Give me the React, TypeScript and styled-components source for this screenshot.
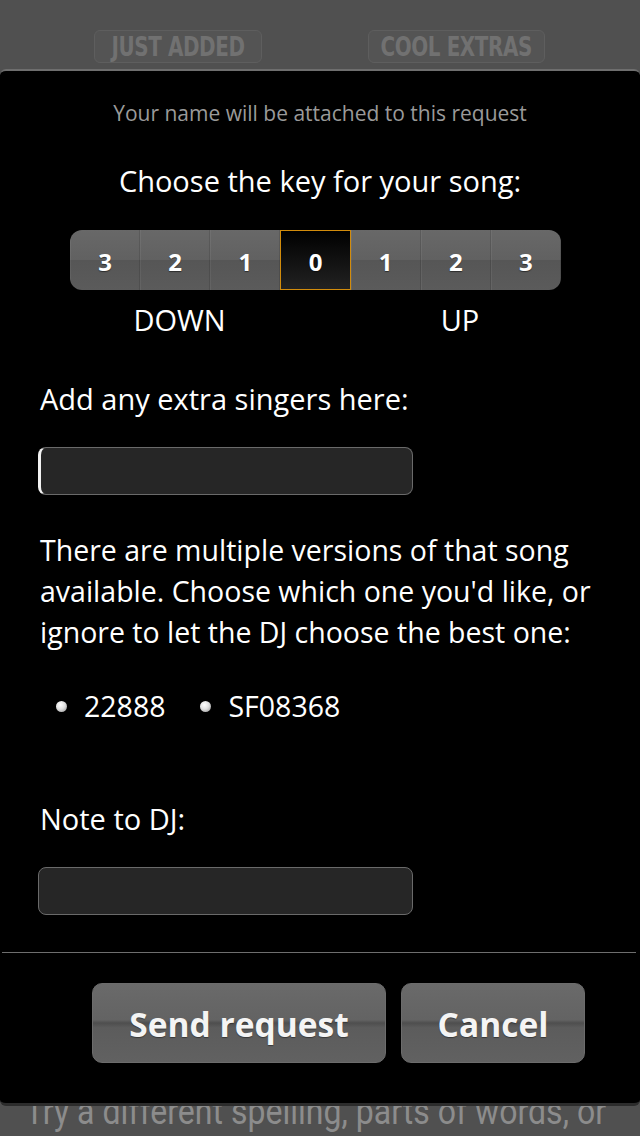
import styled, { createGlobalStyle } from "styled-components";

const GlobalStyle = createGlobalStyle`
  html, body {
    margin: 0;
    padding: 0;
    background: #505050;
  }
  * {
    box-sizing: border-box;
  }
`;

const keys = ["3", "2", "1", "0", "1", "2", "3"];

function App() {
  return (
    <Page>
      <GlobalStyle />
      <TabBar>
        <Tab $width={168}>
          <TabText>JUST ADDED</TabText>
        </Tab>
        <Tab $width={177}>
          <TabText>COOL EXTRAS</TabText>
        </Tab>
      </TabBar>
      <Hint>Try a different spelling, parts of words, or</Hint>

      <Dialog>
        <Subtitle>Your name will be attached to this request</Subtitle>
        <Title>Choose the key for your song:</Title>
        <KeyBar>
          {keys.map((k, i) => (
            <KeyButton key={i} $selected={i === 3}>
              {k}
            </KeyButton>
          ))}
        </KeyBar>
        <KeyLabels>
          <KeyLabel>DOWN</KeyLabel>
          <KeyLabel>UP</KeyLabel>
        </KeyLabels>

        <Label $top={43}>Add any extra singers here:</Label>
        <TextInput $focused />

        <Paragraph>
          There are multiple versions of that song
          <br />
          available. Choose which one you'd like, or
          <br />
          ignore to let the DJ choose the best one:
        </Paragraph>
        <Versions>
          <Version>
            <Dot />
            22888
          </Version>
          <Version>
            <Dot />
            SF08368
          </Version>
        </Versions>

        <Label $top={77}>Note to DJ:</Label>
        <TextInput />

        <Divider />
        <Actions>
          <ActionButton $width={294}>Send request</ActionButton>
          <ActionButton $width={184}>Cancel</ActionButton>
        </Actions>
      </Dialog>
    </Page>
  );
}

export default App;

const Page = styled.div`
  position: relative;
  width: 640px;
  height: 1136px;
  overflow: hidden;
  background: #505050;
  font-family: "Open Sans", "Noto Sans", sans-serif;
`;

const TabBar = styled.div`
  display: flex;
  column-gap: 106px;
  height: 70px;
  padding: 30px 0 0 94px;
`;

const Tab = styled.div<{ $width: number }>`
  width: ${(p) => p.$width}px;
  height: 33px;
  display: flex;
  align-items: center;
  justify-content: center;
  border: 1px solid #5e5e5e;
  border-radius: 6px;
  background: #545454;
  overflow: hidden;
`;

const TabText = styled.span`
  display: inline-block;
  color: #717171;
  font-family: "DejaVu Sans Condensed", "Open Sans", sans-serif;
  font-weight: 700;
  font-size: 27px;
  letter-spacing: -0.5px;
  white-space: nowrap;
  transform: scaleX(0.82);
`;

const Hint = styled.p`
  margin: 1020px 0 0 0;
  padding-left: 28px;
  color: #8c8c8c;
  font-family: Roboto, "Liberation Sans", sans-serif;
  font-size: 36px;
  line-height: 44px;
  white-space: nowrap;
  transform: scaleX(0.89);
  transform-origin: left center;
`;

const Dialog = styled.div`
  position: absolute;
  top: 69px;
  left: 0;
  right: 0;
  height: 1037px;
  background: #000;
  border-top: 2px solid #6e6e6e;
  border-bottom: 3px solid #2c2c2c;
  border-radius: 6px;
  padding: 27px 0 0 40px;
  color: #fff;
`;

const Subtitle = styled.div`
  margin-left: -40px;
  text-align: center;
  color: #9a9a9a;
  font-size: 21px;
  line-height: 30px;
`;

const Title = styled.div`
  margin: 35px 0 0 -40px;
  text-align: center;
  font-size: 29px;
  line-height: 36px;
`;

const KeyBar = styled.div`
  margin: 31px 0 0 30px;
  width: 491px;
  height: 60px;
  display: grid;
  grid-template-columns: repeat(7, 1fr);
  border-radius: 12px;
  overflow: hidden;
  background: linear-gradient(#686868 0%, #616161 50%, #565656 50%, #5b5b5b 100%);
`;

const KeyButton = styled.div<{ $selected?: boolean }>`
  display: flex;
  align-items: center;
  justify-content: center;
  padding-top: 2px;
  font-weight: 700;
  font-size: 24px;
  color: #fff;
  text-shadow: 0 1px 1px rgba(0, 0, 0, 0.5);
  border-left: 1px solid rgba(255, 255, 255, 0.06);
  border-right: 1px solid rgba(0, 0, 0, 0.12);
  ${(p) =>
    p.$selected &&
    `
    background: linear-gradient(#000 0%, #111 50%, #222 100%);
    border: 1px solid #d28c0c;
  `}
`;

const KeyLabels = styled.div`
  margin: 12px 0 0 34px;
  width: 491px;
  display: grid;
  grid-template-columns: 211px 70px 210px;
  & > :last-child {
    grid-column: 3;
  }
`;

const KeyLabel = styled.div`
  text-align: center;
  font-size: 29px;
  line-height: 36px;
`;

const Label = styled.div<{ $top: number }>`
  margin-top: ${(p) => p.$top}px;
  font-size: 29px;
  line-height: 36px;
`;

const TextInput = styled.div<{ $focused?: boolean }>`
  margin: 30px 0 0 -2px;
  width: 375px;
  height: 48px;
  background: #262626;
  border: 1px solid #6a6a6a;
  border-radius: 8px;
  ${(p) =>
    p.$focused &&
    `
    border-left: 3px solid #f2f2f2;
  `}
`;

const Paragraph = styled.p`
  margin: 35px 0 0 0;
  font-size: 28.5px;
  line-height: 41px;
  white-space: nowrap;
`;

const Versions = styled.div`
  margin-top: 35px;
  display: flex;
  column-gap: 35px;
  padding-left: 16px;
`;

const Version = styled.div`
  display: flex;
  align-items: center;
  column-gap: 17px;
  font-size: 28.5px;
  line-height: 36px;
`;

const Dot = styled.span`
  width: 11px;
  height: 11px;
  border-radius: 50%;
  background: radial-gradient(circle at 40% 35%, #ffffff 0%, #e0e0e0 45%, #8a8a8a 100%);
`;

const Divider = styled.div`
  margin: 37px 0 0 -38px;
  width: 634px;
  height: 1px;
  background: #6e6e6e;
`;

const Actions = styled.div`
  margin: 30px 0 0 52px;
  display: flex;
  column-gap: 15px;
`;

const ActionButton = styled.button<{ $width: number }>`
  width: ${(p) => p.$width}px;
  height: 80px;
  padding-top: 3px;
  border: 1px solid #6c6c6c;
  border-radius: 10px;
  background: linear-gradient(
    #6a6a6a 0%,
    #636363 46%,
    #4e4e4e 50%,
    #5c5c5c 56%,
    #616161 100%
  );
  color: #f4f4f4;
  font-family: "Open Sans", "Noto Sans", sans-serif;
  font-weight: 700;
  font-size: 33.5px;
  text-shadow: 0 1px 1px rgba(0, 0, 0, 0.4);
`;
